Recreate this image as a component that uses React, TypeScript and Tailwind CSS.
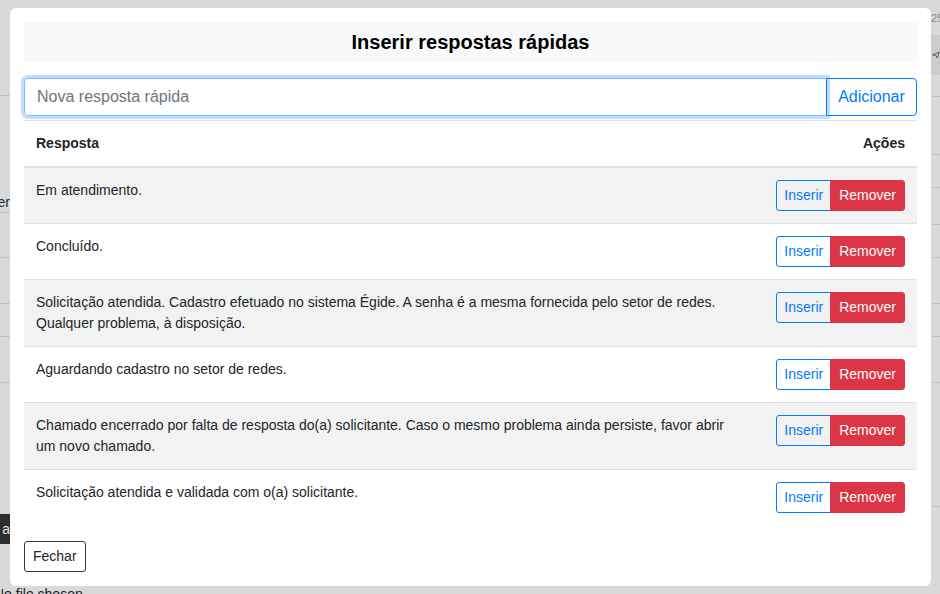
import React from "react";

const RESPOSTAS = [
  "Em atendimento.",
  "Concluído.",
  "Solicitação atendida. Cadastro efetuado no sistema Égide. A senha é a mesma fornecida pelo setor de redes. Qualquer problema, à disposição.",
  "Aguardando cadastro no setor de redes.",
  "Chamado encerrado por falta de resposta do(a) solicitante. Caso o mesmo problema ainda persiste, favor abrir um novo chamado.",
  "Solicitação atendida e validada com o(a) solicitante.",
];

// heights of the rows of the page behind the backdrop (left / right edges)
const LEFT_ROWS = [96, 117, 45, 46, 33, 46];
const RIGHT_ROWS = [58, 33, 37, 33, 46, 33, 46, 124];

function PageBehind() {
  return (
    <div className="flex h-full w-full">
      {/* left edge */}
      <div className="flex w-[10px] flex-col">
        {LEFT_ROWS.map((h, i) => (
          <div
            key={i}
            style={{ height: h }}
            className="relative shrink-0 border-b border-[#c2c2c2]"
          >
            {i === 1 && (
              <span className="absolute bottom-[-1px] right-0 text-[14px] leading-[21px] text-[#1a2a3a]">
                er
              </span>
            )}
          </div>
        ))}
        <div className="mt-[131px] flex h-[30px] w-[10px] shrink-0 items-center justify-end bg-[#2b2e31] text-[14px] text-[#e6e6e6]">
          a
        </div>
        <div className="ml-[-6px] mt-[40px] whitespace-nowrap text-[14px] leading-[21px] text-[#1b1b2a]">
          No file chosen
        </div>
      </div>

      <div className="flex-1" />

      {/* right edge */}
      <div className="flex w-[9px] flex-col">
        <div className="h-[35px] shrink-0 overflow-hidden pt-[11px] text-[11px] leading-[14px] text-[#7a8a96]">
          25
        </div>
        <div className="flex h-[40px] shrink-0 items-center bg-[#cdcdcd] pl-[1px]">
          <svg width="18" height="18" viewBox="0 0 24 24" fill="none" stroke="#222" strokeWidth="2" strokeLinejoin="round">
            <path d="M2 12 L22 3 L16 21 L11 13 Z" />
          </svg>
        </div>
        <div className="h-[22px] shrink-0 border-b border-[#c2c2c2]" />
        {RIGHT_ROWS.map((h, i) => (
          <div
            key={i}
            style={{ height: h }}
            className="shrink-0 border-b border-[#c2c2c2]"
          />
        ))}
      </div>
    </div>
  );
}

function Linha({ texto, zebra }: { texto: string; zebra: boolean }) {
  return (
    <tr className={zebra ? "bg-[#f2f2f2]" : ""}>
      <td className="border-t border-[#dee2e6] px-3 py-3 align-top">
        <div className="max-w-[700px]">{texto}</div>
      </td>
      <td className="border-t border-[#dee2e6] px-3 py-3 text-right align-top">
        <div className="inline-flex">
          <button className="h-[31px] rounded-l-[3px] border border-[#007bff] px-[7px] text-[14px] text-[#007bff]">
            Inserir
          </button>
          <button className="-ml-px h-[31px] rounded-r-[3px] border border-[#dc3545] bg-[#dc3545] px-2 text-[14px] text-white">
            Remover
          </button>
        </div>
      </td>
    </tr>
  );
}

export default function App() {
  return (
    <div
      className="relative h-[594px] w-[940px] overflow-hidden bg-[#d9d9d9]"
      style={{ fontFamily: '"Liberation Sans", Arial, sans-serif' }}
    >
      <PageBehind />

      {/* modal */}
      <div className="absolute left-[10px] top-[8px] flex h-[578px] w-[921px] flex-col rounded-[6px] bg-white p-[14px] text-[#212529]">
        <div className="h-[40px] bg-[#f8f9fa] text-center text-[20px] font-bold leading-[40px] text-black">
          Inserir respostas rápidas
        </div>

        <div className="mt-[16px] flex h-[38px]">
          <input
            placeholder="Nova resposta rápida"
            className="h-[38px] flex-1 rounded-l-[4px] border border-[#80bdff] px-3 text-[16px] text-[#495057] shadow-[0_0_0_3px_rgba(0,123,255,0.25)] outline-none placeholder:text-[#6c757d]"
          />
          <button className="-ml-px h-[38px] w-[91px] rounded-r-[4px] border border-[#007bff] text-[16px] text-[#007bff]">
            Adicionar
          </button>
        </div>

        <table className="mt-[4px] w-full border-collapse text-[14px] leading-[21px]">
          <thead>
            <tr>
              <th className="border-t border-b-2 border-[#dee2e6] px-3 py-3 text-left font-bold">
                Resposta
              </th>
              <th className="border-t border-b-2 border-[#dee2e6] px-3 py-3 text-right font-bold">
                Ações
              </th>
            </tr>
          </thead>
          <tbody>
            {RESPOSTAS.map((r, i) => (
              <Linha key={i} texto={r} zebra={i % 2 === 0} />
            ))}
          </tbody>
        </table>

        <div className="mt-auto">
          <button className="h-[31px] rounded-[3px] border border-[#343a40] px-2 text-[14px] text-[#212529]">
            Fechar
          </button>
        </div>
      </div>
    </div>
  );
}
